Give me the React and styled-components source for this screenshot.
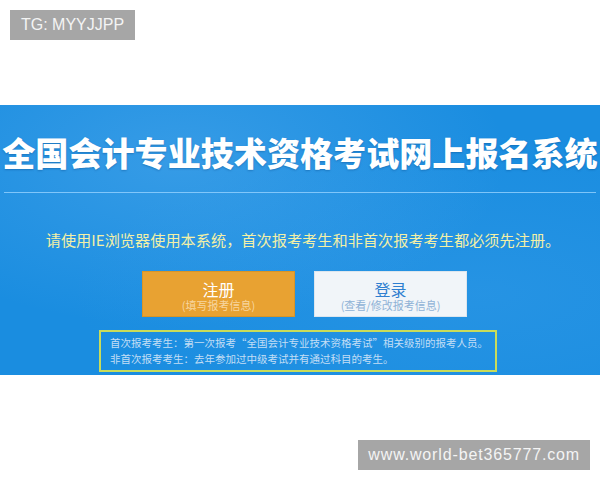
import React from "react";
import styled, { createGlobalStyle } from "styled-components";

const Global = createGlobalStyle`
  html, body { margin: 0; padding: 0; background: #fff; }
  body { font-family: "Noto Sans CJK SC", "Liberation Sans", sans-serif; }
`;

const Page = styled.div`
  width: 600px;
  height: 480px;
  display: flex;
  flex-direction: column;
  overflow: hidden;
`;

const Badge = styled.div`
  align-self: ${(p) => (p.$right ? "flex-end" : "flex-start")};
  margin: ${(p) => (p.$right ? "65px 10px 0 0" : "10px 0 0 10px")};
  height: 30px;
  padding: 0 ${(p) => (p.$right ? "10px" : "11px")};
  display: flex;
  align-items: center;
  background: #a6a6a6;
  color: #f4f4f4;
  font-family: "Liberation Sans", Arial, sans-serif;
  font-size: 16px;
  letter-spacing: ${(p) => (p.$right ? "0.85px" : "0")};
`;

const Banner = styled.section`
  margin-top: 65px;
  height: 270px;
  box-sizing: border-box;
  padding-top: 27px;
  display: flex;
  flex-direction: column;
  align-items: center;
  background:
    radial-gradient(ellipse at 30% 20%, rgba(120, 190, 245, 0.3), transparent 55%),
    radial-gradient(ellipse at 80% 70%, rgba(80, 170, 240, 0.22), transparent 60%),
    #1a8de0;
`;

const Title = styled.h1`
  margin: 0;
  font-size: 33.1px;
  line-height: 40px;
  font-weight: 900;
  color: #ffffff;
  white-space: nowrap;
  text-shadow: 0 1px 2px rgba(0, 60, 120, 0.35);
`;

const Divider = styled.hr`
  width: 592px;
  margin: 20px 0 0;
  border: none;
  height: 1px;
  background: rgba(150, 210, 255, 0.8);
`;

const Notice = styled.p`
  margin: 36px 0 0 6px;
  font-size: 15.2px;
  line-height: 20px;
  color: #f3f0a6;
  white-space: nowrap;
`;

const ButtonRow = styled.div`
  margin-top: 22px;
  display: flex;
  gap: 19px;
  margin-left: 9px;
`;

const Btn = styled.div`
  width: 153px;
  height: 46px;
  box-sizing: border-box;
  padding-top: 5px;
  display: flex;
  flex-direction: column;
  align-items: center;
  justify-content: center;
  background: ${(p) => (p.$primary ? "#e8a232" : "#f1f5f9")};
  border: 1px solid ${(p) => (p.$primary ? "#d99526" : "#dde6ee")};
`;

const BtnLabel = styled.span`
  font-size: 16px;
  line-height: 17px;
  color: ${(p) => (p.$primary ? "#ffffff" : "#2f7fd0")};
`;

const BtnSub = styled.span`
  font-size: 11px;
  line-height: 14px;
  color: ${(p) => (p.$primary ? "#f7d6a0" : "#8fb2d6")};
`;

const InfoBox = styled.div`
  margin-top: 13px;
  width: 398px;
  height: 42px;
  box-sizing: border-box;
  border: 2px solid #c9dc5a;
  padding: 3px 0 0 9px;
  align-self: flex-start;
  margin-left: 99px;
  font-size: 10.5px;
  line-height: 16px;
  color: #c3def5;
  white-space: nowrap;
`;

export default function App() {
  return (
    <Page>
      <Global />
      <Badge>TG: MYYJJPP</Badge>
      <Banner>
        <Title>全国会计专业技术资格考试网上报名系统</Title>
        <Divider />
        <Notice>请使用IE浏览器使用本系统，首次报考考生和非首次报考考生都必须先注册。</Notice>
        <ButtonRow>
          <Btn $primary>
            <BtnLabel $primary>注册</BtnLabel>
            <BtnSub $primary>(填写报考信息)</BtnSub>
          </Btn>
          <Btn>
            <BtnLabel>登录</BtnLabel>
            <BtnSub>(查看/修改报考信息)</BtnSub>
          </Btn>
        </ButtonRow>
        <InfoBox>
          <div>首次报考考生：第一次报考“全国会计专业技术资格考试”相关级别的报考人员。</div>
          <div>非首次报考考生：去年参加过中级考试并有通过科目的考生。</div>
        </InfoBox>
      </Banner>
      <Badge $right>www.world-bet365777.com</Badge>
    </Page>
  );
}
